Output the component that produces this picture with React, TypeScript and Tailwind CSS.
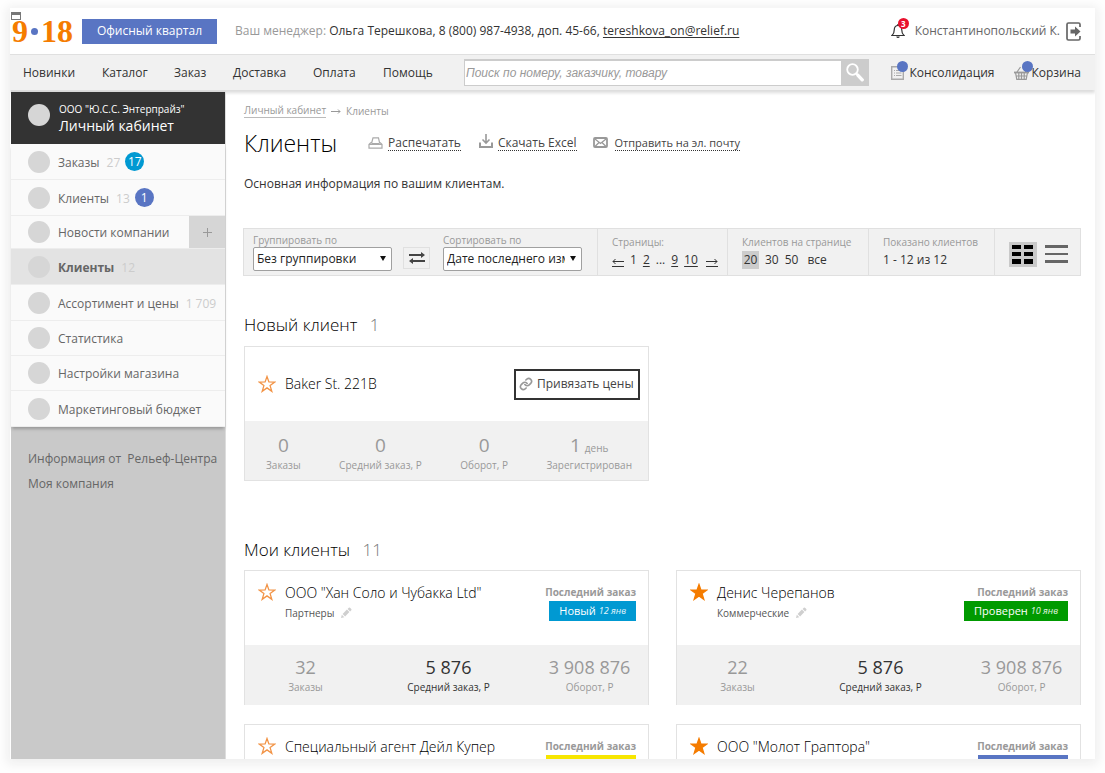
import React from "react";

type Status = { label?: string; date?: string; className: string };
type Client = {
  name: string;
  group?: string;
  favorite: boolean;
  orders?: string;
  status: Status;
};

const navItems = [
  { label: "Новинки", className: "w-[79px]" },
  { label: "Каталог", className: "w-[72px]" },
  { label: "Заказ", className: "w-[59px]" },
  { label: "Доставка", className: "w-[80px]" },
  { label: "Оплата", className: "w-[70px]" },
  { label: "Помощь", className: "w-[81px]" },
];

const menu = [
  { label: "Заказы", count: "27", badge: "17", badgeClass: "bg-[#0099d2]", height: "h-9" },
  { label: "Клиенты", count: "13", badge: "1", badgeClass: "bg-[#5975c3]", height: "h-9" },
  { label: "Новости компании", expandable: true, height: "h-[33px]" },
  { label: "Клиенты", count: "12", active: true, height: "h-9" },
  { label: "Ассортимент и цены", count: "1 709", height: "h-9" },
  { label: "Статистика", height: "h-[35px]" },
  { label: "Настройки магазина", height: "h-[35px]" },
  { label: "Маркетинговый бюджет", height: "h-9" },
];

const clients: Client[] = [
  {
    name: 'ООО "Хан Соло и Чубакка Ltd"',
    group: "Партнеры",
    favorite: false,
    orders: "32",
    status: { label: "Новый", date: "12 янв", className: "bg-[#0099d2]" },
  },
  {
    name: "Денис Черепанов",
    group: "Коммерческие",
    favorite: true,
    orders: "22",
    status: { label: "Проверен", date: "10 янв", className: "bg-[#009a00]" },
  },
  {
    name: "Специальный агент Дейл Купер",
    favorite: false,
    status: { className: "w-[90px] bg-[#f7e600]" },
  },
  {
    name: 'ООО "Молот Граптора"',
    favorite: true,
    status: { className: "w-[90px] bg-[#5975c3]" },
  },
];

function Star({ filled }: { filled: boolean }) {
  return (
    <svg viewBox="0 0 18 18" className="size-[18px]" aria-hidden="true">
      <path
        d="M9 1.500l1.900 5.400 5.900.2-4.700 3.500 1.700 5.700L9 12.900l-4.800 3.400 1.700-5.700L1.200 7.100l5.900-.2z"
        fill={filled ? "#f57c00" : "none"}
        stroke={filled ? "#f57c00" : "#f29447"}
        strokeWidth="1.300"
      />
    </svg>
  );
}

function Pencil() {
  return (
    <svg viewBox="0 0 12 12" className="size-3" fill="#cfcfcf" aria-hidden="true">
      <path d="M1 11l.8-3.300 2.500 2.500zM2.600 6.900l4.300-4.300 2.500 2.500-4.300 4.300zM7.600 1.900L8.800.7q.6-.5 1.200 0l1.300 1.300q.5.600 0 1.200l-1.200 1.200z" />
    </svg>
  );
}

type StatProps = { value: string; label: string; unit?: string; strong?: boolean; large?: boolean };

function Stat({ value, label, unit, strong, large }: StatProps) {
  return (
    <div className={strong ? "text-center text-[#333]" : "text-center text-[#999]"}>
      <div className={large ? "flex h-6 items-baseline justify-center gap-1 text-[19px] leading-6" : "text-lg leading-6"}>
        {value}
        {unit && <span className="text-[10px] leading-4">{unit}</span>}
      </div>
      <div className="text-[10px] leading-4">{label}</div>
    </div>
  );
}

function FavoriteButton({ filled }: { filled: boolean }) {
  return (
    <button type="button" aria-label="Избранное" className="mr-[9px] block">
      <Star filled={filled} />
    </button>
  );
}

function ClientCard({ client }: { client: Client }) {
  return (
    <article className="h-[135px] border border-b-0 border-[#e2e2e2]">
      <div className="flex h-[74px] items-start justify-between pt-3 pr-3 pl-[13px]">
        <div className="flex items-start">
          <FavoriteButton filled={client.favorite} />
          <div>
            <h3 className="text-sm leading-5 font-light text-black">{client.name}</h3>
            {client.group && (
              <div className="flex items-center gap-1.5 text-[10px] leading-5 text-[#555]">
                {client.group}
                <button type="button" aria-label="Изменить группу">
                  <Pencil />
                </button>
              </div>
            )}
          </div>
        </div>
        <div className="flex flex-col items-end">
          <div className="text-[10px] leading-[18px] font-bold text-[#999]">Последний заказ</div>
          <div className={`flex h-5 items-center gap-[3px] px-2.5 text-[11px] text-white ${client.status.className}`}>
            {client.status.label}
            {client.status.date && <em className="text-[9px] text-white/90">{client.status.date}</em>}
          </div>
        </div>
      </div>
      {client.orders && (
        <div className="grid h-[60px] grid-cols-[30fr_41fr_29fr] bg-[#f1f1f1] pt-2.5">
          <Stat value={client.orders} label="Заказы" />
          <Stat value="5 876" label="Средний заказ, Р" strong />
          <Stat value="3 908 876" label="Оборот, Р" />
        </div>
      )}
    </article>
  );
}

function Header() {
  return (
    <header className="flex h-[46px] items-center whitespace-nowrap pr-3.5">
      <div className="relative flex w-[72px] items-center pl-0.5">
        <svg viewBox="0 0 10 8" className="absolute top-1 left-px h-2 w-2.5" aria-hidden="true">
          <path d="M0 0h10v8H0z" fill="#777" />
          <path d="M1 3h8v4H1z" fill="#fff" />
        </svg>
        <a
          href="#home"
          className="flex items-center font-['Liberation_Serif',serif] text-[32px] leading-[46px] font-bold text-[#f57c00]"
        >
          <span>9</span>
          <span className="mx-[3px] size-[7px] rounded-full bg-[#5975c3]" />
          <span>18</span>
        </a>
      </div>
      <a href="#quarter" className="flex h-[25px] w-[135px] items-center justify-center bg-[#5975c3] text-xs text-white">
        Офисный квартал
      </a>
      <p className="ml-[18px] text-xs text-[#333]">
        <span className="text-[#999]">Ваш менеджер:</span> Ольга Терешкова, 8 (800) 987-4938, доп. 45-66,{" "}
        <a href="mailto:tereshkova_on@relief.ru" className="underline underline-offset-2">
          tereshkova_on@relief.ru
        </a>
      </p>
      <div className="ml-auto flex items-center">
        <button type="button" aria-label="Уведомления: 3" className="relative mr-2 h-5 w-4">
          <svg viewBox="0 0 14 16" className="absolute bottom-0.5 left-0 h-4 w-3.5" fill="none" aria-hidden="true">
            <path d="M1 12.500h12c-1.800-1.600-2.300-3-2.300-6C10.700 4 9.300 2.500 7 2.500S3.300 4 3.300 6.500c0 3-.5 4.400-2.300 6z" stroke="#333" strokeWidth="1.200" />
            <path d="M7 1v1.500" stroke="#333" strokeWidth="1.500" />
            <path d="M5.200 13.500h3.600Q8.500 15 7 15t-1.800-1.500z" fill="#333" />
          </svg>
          <span className="absolute -top-[3px] left-[7px] flex size-[11px] items-center justify-center rounded-full bg-[#e8112d] text-[8px] leading-none font-bold text-white">
            3
          </span>
        </button>
        <a href="#profile" className="text-xs text-[#666]">Константинопольский К.</a>
        <button type="button" aria-label="Выйти" className="ml-1.5">
          <svg viewBox="0 0 15 19" className="h-[19px] w-[15px]" fill="none" aria-hidden="true">
            <path d="M14 5V2.500Q14 1 12.500 1h-10Q1 1 1 2.500v14Q1 18 2.500 18h10q1.500 0 1.500-1.500V14" stroke="#666" strokeWidth="1.700" />
            <path d="M4.500 7.500H9v-3l5.500 5L9 14.500v-3H4.500z" fill="#666" />
          </svg>
        </button>
      </div>
    </header>
  );
}

function NavBar() {
  return (
    <div className="relative z-10 flex h-9 items-center whitespace-nowrap border-t border-[#e0e0e0] bg-[#f1f1f1] pr-3.5 pl-[13px] text-xs text-[#333] shadow-[0_3px_3px_#dddddd]">
      <nav className="flex">
        {navItems.map((item) => (
          <a key={item.label} href="#nav" className={item.className}>
            {item.label}
          </a>
        ))}
      </nav>
      <form className="flex h-[27px] flex-1" role="search" onSubmit={(e) => e.preventDefault()}>
        <input
          type="search"
          aria-label="Поиск"
          placeholder="Поиск по номеру, заказчику, товару"
          className="min-w-0 flex-1 appearance-none rounded-none border border-r-0 border-[#ccc] border-t-2 bg-white px-px font-['Liberation_Sans',sans-serif] text-xs italic outline-none placeholder:text-[#999]"
        />
        <button type="submit" aria-label="Найти" className="flex w-7 items-center justify-center bg-[#ccc]">
          <svg viewBox="0 0 18 19" className="h-[19px] w-[18px]" fill="none" stroke="#fff" aria-hidden="true">
            <circle cx="6.500" cy="6.500" r="5.300" strokeWidth="1.800" />
            <path d="M10.300 10.500l1.800 1.800" strokeWidth="2" />
            <path d="M12 12.300l4.200 4.500" strokeWidth="3.400" strokeLinecap="round" />
          </svg>
        </button>
      </form>
      <a href="#consolidation" className="relative ml-[22px] flex items-center gap-[5px]">
        <svg viewBox="0 0 13 14" className="h-3.5 w-[13px]" fill="none" stroke="#aaa" aria-hidden="true">
          <path d="M.7.7h11.600v12.600H.7z" strokeWidth="1.400" />
          <path d="M3 4.500h1M5 4.500h5.500M3 7h1M5 7h5.500M3 9.500h1M5 9.500h5.500" />
        </svg>
        <span className="absolute -top-1 left-1.5 size-[11px] rounded-full bg-[#5975c3]" />
        Консолидация
      </a>
      <a href="#cart" className="relative ml-5 flex items-center gap-0.5">
        <svg viewBox="0 0 15 14" className="h-3.5 w-[15px]" fill="none" stroke="#999" aria-hidden="true">
          <path d="M3 6l3.500-5M12 6L8.500 1" strokeWidth="1.200" />
          <path d="M0 6.500h15" strokeWidth="1.800" />
          <path d="M1.600 7l1.200 6.300h9.400L13.400 7M4.800 7v6M7.500 7v6M10.200 7v6M2.300 10h10.400" strokeWidth="1.200" />
        </svg>
        <span className="absolute -top-1 left-2 size-[11px] rounded-full bg-[#5975c3]" />
        Корзина
      </a>
    </div>
  );
}

function Sidebar() {
  return (
    <aside className="ml-px w-[215px] shrink-0 border-r border-[#ddd] bg-[#c9c9c9] pt-0.5 whitespace-nowrap text-xs text-[#666]">
      <div className="relative z-20 flex h-[52px] items-center bg-[#333] pl-[17px] text-white">
        <span className="mr-[9px] mb-1.5 size-[22px] rounded-full bg-[#d6d6d6]" />
        <div>
          <div className="text-[10px] leading-4">ООО "Ю.С.С. Энтерпрайз"</div>
          <div className="text-sm leading-[18px]">Личный кабинет</div>
        </div>
      </div>
      <ul className="bg-[#fafafa] shadow-[0_3px_3px_-1px_#999999]">
        {menu.map((item, index) => (
          <li key={index} className={`flex items-center border-b border-[#ededed] pl-[17px] ${item.height} ${item.active ? "bg-[#e3e3e3]" : ""}`}>
            <span className="mr-2 size-[22px] rounded-full bg-[#d6d6d6]" />
            <a href="#section" className={item.active ? "pt-0.5 font-bold" : "pt-0.5"}>{item.label}</a>
            {item.count && <span className="ml-[7px] pt-0.5 text-[#ccc]">{item.count}</span>}
            {item.badge && (
              <span className={`ml-[5px] flex size-[19px] items-center justify-center rounded-full text-white ${item.badgeClass}`}>
                {item.badge}
              </span>
            )}
            {item.expandable && (
              <button type="button" aria-label="Раскрыть" className="ml-auto flex h-full w-9 items-center justify-center bg-[#d6d6d6]">
                <svg viewBox="0 0 9 9" className="size-[9px]" stroke="#999" aria-hidden="true">
                  <path d="M4.500 0v9M0 4.500h9" />
                </svg>
              </button>
            )}
          </li>
        ))}
      </ul>
      <div className="mt-[19px] pl-[17px] leading-[25px]">
        <a href="#info" className="block">Информация от&nbsp; Рельеф-Центра</a>
        <a href="#company" className="block">Моя компания</a>
      </div>
    </aside>
  );
}

function Dropdown({ id, label, options }: { id: string; label: string; options: string[] }) {
  return (
    <div className="w-[139px]">
      <label htmlFor={id} className="block text-[10px] leading-[14px] text-[#999]">{label}</label>
      <div className="relative">
        <select
          id={id}
          className="block h-6 w-full appearance-none rounded-xs border border-[#a0a0a0] bg-white pr-4 pl-[3px] text-xs text-[#222]"
        >
          {options.map((option) => (
            <option key={option}>{option}</option>
          ))}
        </select>
        <svg viewBox="0 0 6 5" className="pointer-events-none absolute top-[9px] right-1.5 h-[5px] w-1.5" aria-hidden="true">
          <path d="M0 0h6L3 5z" fill="#111" />
        </svg>
      </div>
    </div>
  );
}

function Toolbar() {
  const cell = "border-l border-[#e0e0e0] pt-1.5 pl-3.5";
  const caption = "text-[10px] leading-[14px] text-[#999]";
  const row = "mt-px flex h-5 items-center text-xs text-[#333]";
  const arrow = "mt-1 border-b border-[#333] pb-0.5";
  return (
    <div className="-ml-px mt-[34px] flex h-12 border border-[#e0e0e0] bg-[#f1f1f1] whitespace-nowrap">
      <div className="flex flex-1 pt-1 pl-[9px]">
        <Dropdown id="group" label="Группировать по" options={["Без группировки"]} />
        <button type="button" aria-label="Поменять порядок" className="mt-3.5 mr-[13px] ml-[11px] flex h-[22px] w-[27px] items-center justify-center border border-[#e0e0e0]">
          <svg viewBox="0 0 16 12" className="h-3 w-4" fill="#444" aria-hidden="true">
            <path d="M0 2h12V0l4 3-4 3V4H0zM16 8H4V6L0 9l4 3v-2h12z" />
          </svg>
        </button>
        <Dropdown id="sort" label="Сортировать по" options={["Дате последнего изменения"]} />
      </div>
      <div className={`${cell} w-[130px]`}>
        <div className={caption}>Страницы:</div>
        <div className={`${row} gap-1.5`}>
          <a href="#prev" aria-label="Назад" className={arrow}>
            <svg viewBox="0 0 12 6" className="h-1.5 w-3" fill="none" stroke="#333" aria-hidden="true"><path d="M12 3.500H1M3.500 1L1 3.500 3.500 6" /></svg>
          </a>
          <span>1</span>
          <a href="#p2" className="underline underline-offset-2">2</a>
          <span>...</span>
          <a href="#p9" className="underline underline-offset-2">9</a>
          <a href="#p10" className="underline underline-offset-2">10</a>
          <a href="#next" aria-label="Вперёд" className={`${arrow} ml-0.5`}>
            <svg viewBox="0 0 12 6" className="h-1.5 w-3" fill="none" stroke="#333" aria-hidden="true"><path d="M0 3.500h11M8.500 1L11 3.500 8.500 6" /></svg>
          </a>
        </div>
      </div>
      <div className={`${cell} w-[141px]`}>
        <div className={caption}>Клиентов на странице</div>
        <div className={`${row} gap-1.5`}>
          <button type="button" className="h-[18px] w-[17px] bg-[#ccc]">20</button>
          <button type="button">30</button>
          <button type="button">50</button>
          <button type="button" className="ml-[3px]">все</button>
        </div>
      </div>
      <div className={`${cell} w-[126px]`}>
        <div className={caption}>Показано клиентов</div>
        <div className={row}>1 - 12 из 12</div>
      </div>
      <div className="flex w-[86px] items-center gap-2 border-l border-[#e0e0e0] pt-1 pl-3.5">
        <button type="button" aria-label="Плитка">
          <svg viewBox="0 0 28 25" className="h-[25px] w-7" aria-hidden="true">
            <path d="M0 0h28v25H0z" fill="#c9c9c9" />
            <path d="M3 3h9v4H3zM15 3h9v4h-9zM3 10h9v4H3zM15 10h9v4h-9zM3 17h9v5H3zM15 17h9v5h-9z" fill="#000" />
          </svg>
        </button>
        <button type="button" aria-label="Список">
          <svg viewBox="0 0 23 18" className="h-[18px] w-[23px]" aria-hidden="true">
            <path d="M0 0h23v3H0zM0 8h23v2H0zM0 15h23v3H0z" fill="#666" />
          </svg>
        </button>
      </div>
    </div>
  );
}

function Actions() {
  const link = "border-b border-dotted border-[#333] leading-[14px]";
  return (
    <div className="flex items-center text-xs text-[#444]">
      <svg viewBox="0 0 15 12" className="mr-[5px] h-3 w-[15px]" fill="none" stroke="#aaa" strokeWidth="1.200" aria-hidden="true">
        <path d="M3.500 6.500L5 .8h5.500l1.200 5.700M1 7.500l2-2M14 7.500l-2-2M1 7.500v3.700h13V7.500zM3.500 6.500h8" />
      </svg>
      <a href="#print" className={link}>Распечатать</a>
      <svg viewBox="0 0 14 14" className="mr-[5px] mb-1 ml-[18px] size-3.5" fill="none" stroke="#999" aria-hidden="true">
        <path d="M7 0v9M3.500 5.500L7 9l3.500-3.500" strokeWidth="1.600" />
        <path d="M1 8.500V13h12V8.500" strokeWidth="2" />
      </svg>
      <a href="#excel" className={link}>Скачать Excel</a>
      <svg viewBox="0 0 15 11" className="mr-[7px] mb-0.5 ml-4 h-[11px] w-[15px]" fill="none" stroke="#999" aria-hidden="true">
        <rect x="1" y="1" width="13" height="9" rx="1" strokeWidth="1.800" />
        <path d="M2 2l5.500 4.500L13 2M2 9.500l4-4M13 9.500l-4-4" strokeWidth="1.300" />
      </svg>
      <a href="#mail" className={`${link} text-[11px]`}>Отправить на эл. почту</a>
    </div>
  );
}

export default function App() {
  return (
    <div className="flex h-screen flex-col bg-[#fefefe] px-2.5 pt-2 pb-3.5 font-['Open_Sans',sans-serif]">
      <div className="flex min-h-0 flex-1 flex-col overflow-hidden bg-white shadow-[0_2px_10px_3px_#eeeeee]">
        <Header />
        <NavBar />
        <div className="flex min-h-0 flex-1">
          <Sidebar />
          <main className="min-w-0 flex-1 overflow-hidden pt-[13px] pr-3.5 pl-[18px]">
            <div className="flex items-center text-[10px] leading-4 text-[#999]">
              <a href="#cabinet" className="border-b border-[#bbb] leading-[13px]">Личный кабинет</a>
              <svg viewBox="0 0 10 5" className="mx-[5px] h-[5px] w-2.5" fill="none" stroke="#999" aria-hidden="true"><path d="M0 2.500h9M7 .5l2 2-2 2" /></svg>
              <span>Клиенты</span>
            </div>
            <div className="mt-2 flex h-8 items-center gap-[31px] whitespace-nowrap">
              <h1 className="text-[23px] leading-8 font-light text-black">Клиенты</h1>
              <Actions />
            </div>
            <p className="mt-[15px] text-xs leading-5 text-[#333]">Основная информация по вашим клиентам.</p>
            <Toolbar />

            <h2 className="mt-[37px] mb-[9px] text-[17px] leading-6 font-light text-black">
              Новый клиент <span className="ml-2 text-[#777]">1</span>
            </h2>
            <div className="grid grid-cols-2 gap-x-[27px]">
              <article className="h-[135px] border border-[#e2e2e2]">
                <div className="flex h-[74px] items-center pr-2 pl-[13px]">
                  <FavoriteButton filled={false} />
                  <h3 className="text-sm font-light text-black">Baker St. 221B</h3>
                  <button type="button" className="ml-auto flex h-[31px] w-[126px] items-center gap-1 border-2 border-[#333] pl-[3px] text-xs whitespace-nowrap text-[#444]">
                    <svg viewBox="0 0 24 24" className="size-3.5" fill="none" stroke="#999" strokeWidth="2.800" strokeLinecap="round" aria-hidden="true">
                      <path d="M10 13a5 5 0 0 0 7.500.5l3-3a5 5 0 0 0-7-7l-1.700 1.700" />
                      <path d="M14 11a5 5 0 0 0-7.500-.5l-3 3a5 5 0 0 0 7 7l1.700-1.700" />
                    </svg>
                    Привязать цены
                  </button>
                </div>
                <div className="flex h-[59px] justify-between bg-[#f1f1f1] pt-3 pr-4 pl-[21px]">
                  <Stat value="0" label="Заказы" large />
                  <Stat value="0" label="Средний заказ, Р" large />
                  <Stat value="0" label="Оборот, Р" large />
                  <Stat value="1" unit="день" label="Зарегистрирован" large />
                </div>
              </article>
            </div>

            <h2 className="mt-[57px] mb-2 text-[17px] leading-6 font-light text-black">
              Мои клиенты <span className="ml-2 text-[#777]">11</span>
            </h2>
            <div className="grid grid-cols-2 gap-x-[27px] gap-y-[19px]">
              {clients.map((client) => (
                <ClientCard key={client.name} client={client} />
              ))}
            </div>
          </main>
        </div>
      </div>
    </div>
  );
}
